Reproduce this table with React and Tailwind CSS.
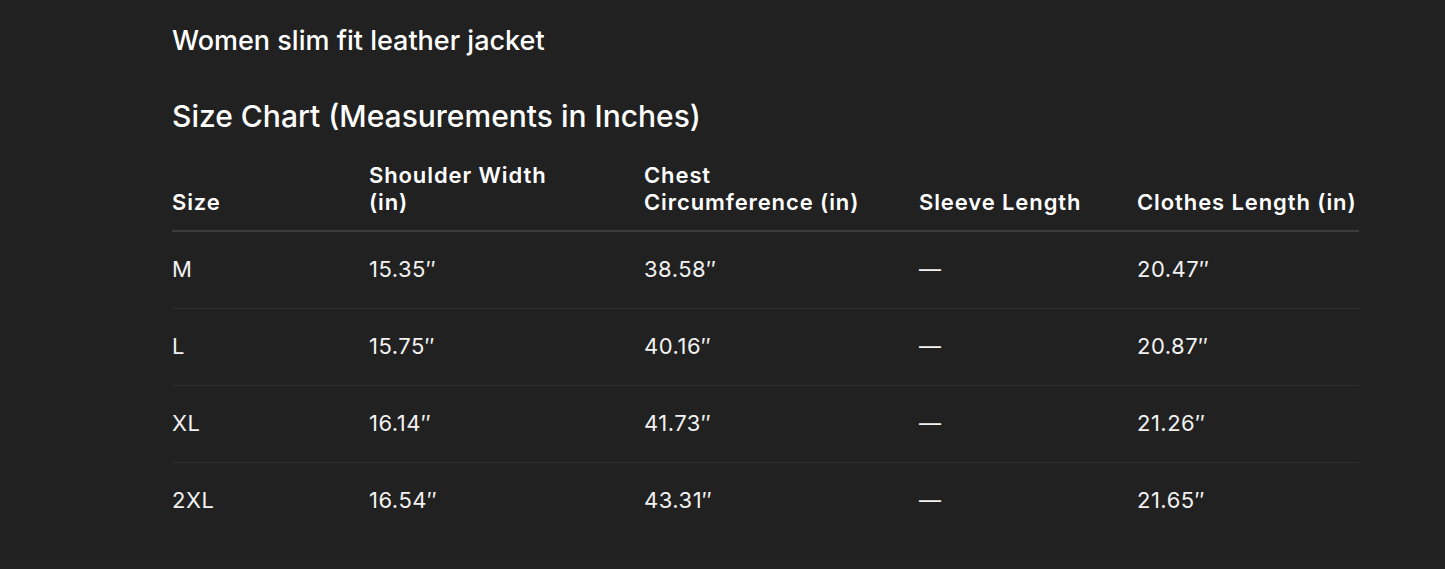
const rows = [
  ["M", "15.35″", "38.58″", "—", "20.47″"],
  ["L", "15.75″", "40.16″", "—", "20.87″"],
  ["XL", "16.14″", "41.73″", "—", "21.26″"],
  ["2XL", "16.54″", "43.31″", "—", "21.65″"],
];

export default function App() {
  return (
    <div className="min-h-[569px] bg-[#212121] text-white font-['Inter',sans-serif] pl-[172px] pt-[24px]">
      <h1 className="text-[27px] leading-[34px] font-medium">Women slim fit leather jacket</h1>
      <h2 className="mt-[39px] text-[30px] leading-[38px] font-medium">Size Chart (Measurements in Inches)</h2>

      <table className="mt-[27px] w-[1187px] table-fixed border-collapse text-left text-[22px]">
        <colgroup>
          <col className="w-[197px]" />
          <col className="w-[275px]" />
          <col className="w-[275px]" />
          <col className="w-[218px]" />
          <col className="w-[222px]" />
        </colgroup>
        <thead>
          <tr className="border-b-2 border-[#3d3d3d]">
            <th className="pb-[14px] align-bottom font-semibold leading-[27px] tracking-[0.9px]">Size</th>
            <th className="pb-[14px] align-bottom font-semibold leading-[27px] tracking-[0.9px]">Shoulder Width<br />(in)</th>
            <th className="pb-[14px] align-bottom font-semibold leading-[27px] tracking-[0.9px]">Chest<br />Circumference (in)</th>
            <th className="pb-[14px] align-bottom font-semibold leading-[27px] tracking-[0.9px]">Sleeve Length</th>
            <th className="pb-[14px] align-bottom font-semibold leading-[27px] tracking-[0.9px] whitespace-nowrap">Clothes Length (in)</th>
          </tr>
        </thead>
        <tbody>
          {rows.map((r, i) => (
            <tr key={r[0]} className={i < rows.length - 1 ? "border-b border-[#2e2e2e]" : ""}>
              {r.map((c, j) => (
                <td key={j} className="h-[77px] align-middle leading-[27px] tracking-[0.5px] text-[#f2f2f2]">{c}</td>
              ))}
            </tr>
          ))}
        </tbody>
      </table>
    </div>
  );
}
